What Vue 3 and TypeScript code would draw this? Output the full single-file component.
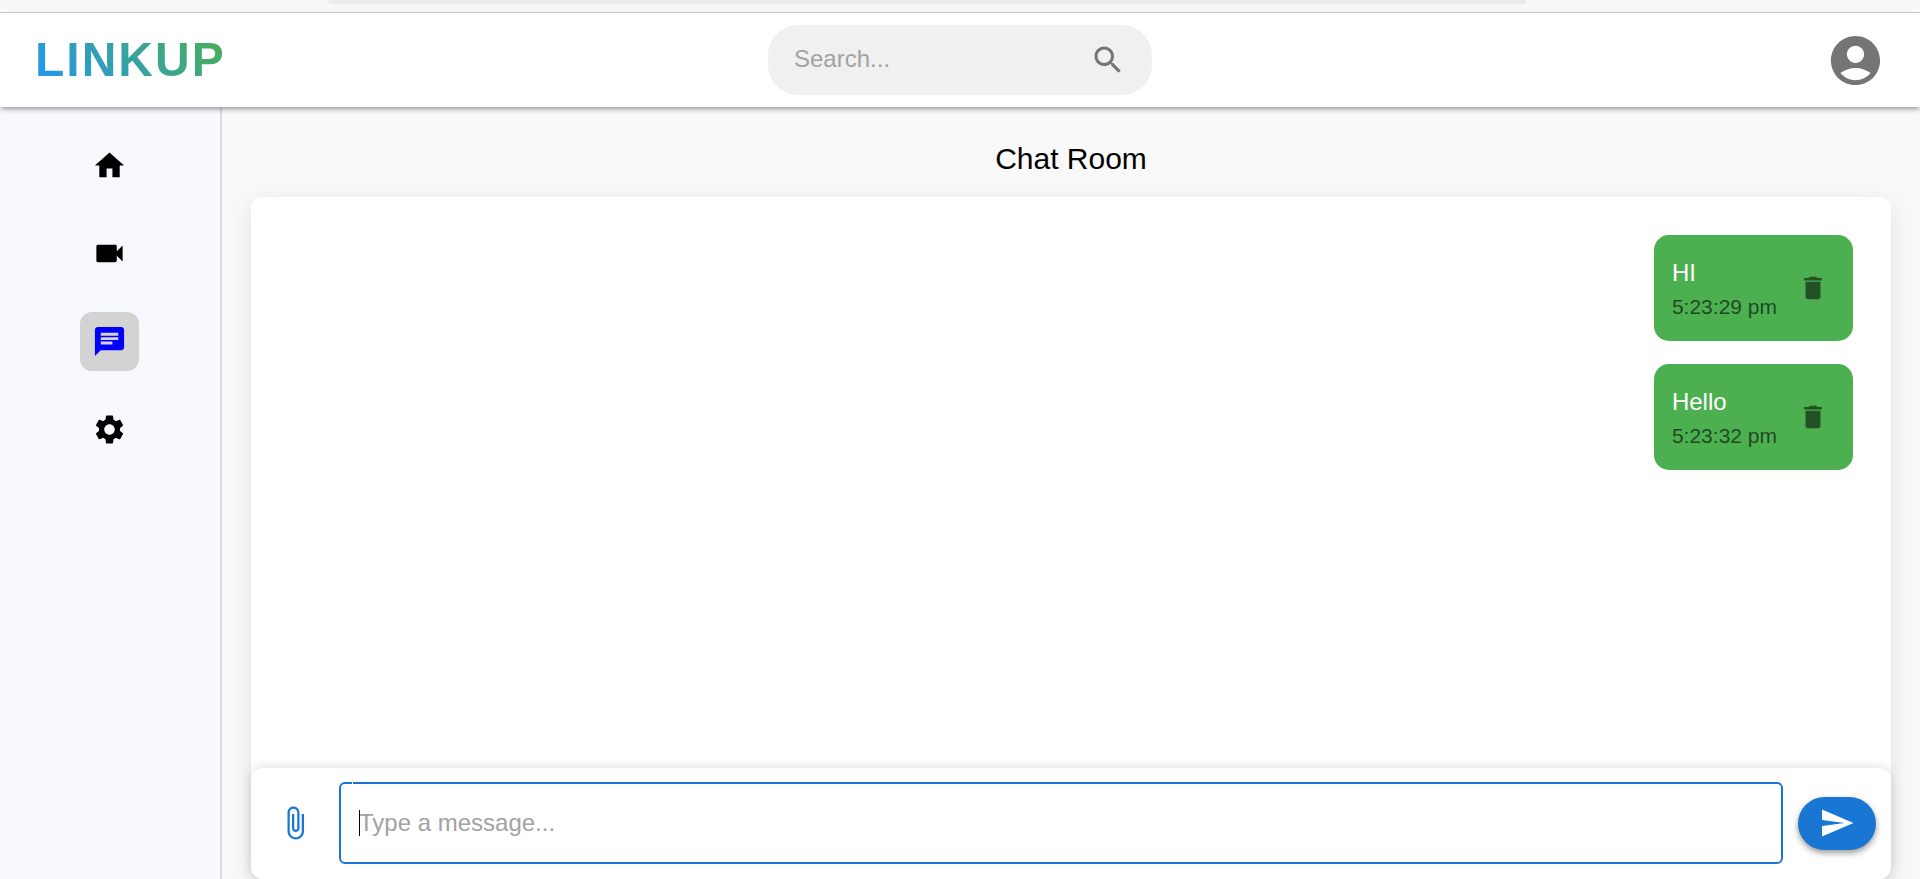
<script setup lang="ts">
import { ref } from 'vue'

interface NavItem {
  label: string
  path: string
  active: boolean
}

interface Message {
  id: number
  text: string
  time: string
}

const navItems: NavItem[] = [
  { label: 'Home', active: false, path: 'M10 20v-6h4v6h5v-8h3L12 3 2 12h3v8z' },
  {
    label: 'Video call',
    active: false,
    path: 'M17 10.5V7c0-.55-.45-1-1-1H4c-.55 0-1 .45-1 1v10c0 .55.45 1 1 1h12c.55 0 1-.45 1-1v-3.500l4 4v-11z',
  },
  {
    label: 'Chat',
    active: true,
    path: 'M20 2H4c-1.100 0-1.990.9-1.990 2L2 22l4-4h14c1.100 0 2-.9 2-2V4c0-1.100-.9-2-2-2M6 9h12v2H6zm8 5H6v-2h8zm4-6H6V6h12z',
  },
  {
    label: 'Settings',
    active: false,
    path: 'M19.140 12.940c.04-.3.060-.61.060-.94 0-.32-.02-.64-.07-.94l2.030-1.580c.18-.14.230-.41.120-.61l-1.920-3.320c-.12-.22-.37-.29-.59-.22l-2.390.96c-.5-.38-1.030-.7-1.620-.94l-.36-2.540c-.04-.24-.24-.41-.48-.41h-3.840c-.24 0-.43.17-.47.41l-.36 2.540c-.59.24-1.130.57-1.620.94l-2.390-.96c-.22-.08-.47 0-.59.22L2.740 8.870c-.12.210-.08.470.12.610l2.030 1.580c-.05.3-.09.630-.09.940s.02.640.070.940l-2.030 1.580c-.18.140-.23.410-.12.610l1.920 3.320c.12.220.370.290.590.220l2.390-.96c.5.380 1.030.7 1.620.940l.360 2.540c.05.240.240.410.480.410h3.840c.24 0 .44-.17.470-.41l.360-2.540c.59-.24 1.130-.56 1.620-.94l2.390.960c.22.080.470 0 .59-.22l1.920-3.320c.12-.22.070-.47-.12-.61zM12 15.600c-1.980 0-3.600-1.620-3.600-3.600s1.620-3.600 3.600-3.600 3.600 1.620 3.600 3.600-1.620 3.600-3.600 3.600',
  },
]

const messages = ref<Message[]>([
  { id: 1, text: 'HI', time: '5:23:29 pm' },
  { id: 2, text: 'Hello', time: '5:23:32 pm' },
])

const query = ref('')
const draft = ref('')

function remove(id: number) {
  messages.value = messages.value.filter((m) => m.id !== id)
}

function send() {
  const text = draft.value.trim()
  if (!text) return
  messages.value.push({ id: Date.now(), text, time: new Date().toLocaleTimeString() })
  draft.value = ''
}
</script>

<template>
  <div class="page">
    <div class="strip"><div class="strip-pill"></div></div>

    <header class="topbar">
      <div class="logo">LINKUP</div>
      <form class="search" role="search" @submit.prevent>
        <input v-model="query" type="text" placeholder="Search..." aria-label="Search" />
        <button type="submit" aria-label="Submit search">
          <svg viewBox="0 0 24 24"><path d="M15.500 14h-.79l-.28-.27C15.410 12.590 16 11.110 16 9.500 16 5.910 13.090 3 9.500 3S3 5.910 3 9.500 5.910 16 9.500 16c1.610 0 3.090-.59 4.230-1.570l.27.280v.79l5 4.990L20.490 19zm-6 0C7.010 14 5 11.990 5 9.500S7.010 5 9.500 5 14 7.010 14 9.500 11.990 14 9.500 14" /></svg>
        </button>
      </form>
      <div class="account">
        <button type="button" aria-label="Account">
          <svg viewBox="0 0 24 24"><path d="M12 2C6.480 2 2 6.480 2 12s4.480 10 10 10 10-4.480 10-10S17.520 2 12 2m0 4c1.930 0 3.500 1.570 3.500 3.500S13.930 13 12 13s-3.500-1.570-3.500-3.500S10.070 6 12 6m0 14c-2.030 0-4.430-.82-6.140-2.880C7.550 15.800 9.680 15 12 15s4.450.8 6.140 2.120C16.430 19.180 14.030 20 12 20" /></svg>
        </button>
      </div>
    </header>

    <div class="body">
      <nav class="sidebar" aria-label="Main">
        <a
          v-for="item in navItems"
          :key="item.label"
          href="#"
          class="nav-item"
          :class="{ active: item.active }"
          :aria-label="item.label"
        >
          <svg viewBox="0 0 24 24"><path :d="item.path" /></svg>
        </a>
      </nav>

      <main class="content">
        <h1>Chat Room</h1>
        <section class="card">
          <div class="messages">
            <article v-for="m in messages" :key="m.id" class="bubble">
              <div>
                <p class="text">{{ m.text }}</p>
                <p class="time">{{ m.time }}</p>
              </div>
              <button type="button" aria-label="Delete message" @click="remove(m.id)">
                <svg viewBox="0 0 24 24"><path d="M6 19c0 1.100.9 2 2 2h8c1.100 0 2-.9 2-2V7H6zM19 4h-3.500l-1-1h-5l-1 1H5v2h14z" /></svg>
              </button>
            </article>
          </div>

          <form class="composer" @submit.prevent="send">
            <button type="button" class="attach" aria-label="Attach file">
              <svg viewBox="0 0 24 24"><path d="M16.500 6v11.500c0 2.210-1.790 4-4 4s-4-1.790-4-4V5c0-1.380 1.120-2.500 2.500-2.500s2.500 1.120 2.500 2.500v10.500c0 .55-.45 1-1 1s-1-.45-1-1V6H10v9.500c0 1.380 1.120 2.500 2.500 2.500s2.500-1.120 2.500-2.500V5c0-2.210-1.790-4-4-4S7 2.790 7 5v12.500c0 3.040 2.460 5.500 5.500 5.500s5.500-2.460 5.500-5.500V6z" /></svg>
            </button>
            <div class="field">
              <input v-model="draft" type="text" placeholder="Type a message..." aria-label="Message" />
              <span class="notch"></span>
              <span v-if="!draft" class="caret"></span>
            </div>
            <button type="submit" class="send" aria-label="Send">
              <svg viewBox="0 0 24 24"><path d="M2.010 21 23 12 2.010 3 2 10l15 2-15 2z" /></svg>
            </button>
          </form>
        </section>
      </main>
    </div>
  </div>
</template>

<style>
body {
  margin: 0;
}
</style>

<style scoped>
.page {
  display: flex;
  flex-direction: column;
  min-height: 100vh;
  font-family: "Liberation Sans", Arial, sans-serif;
  font-size: 24px;
  color: #000;
  background: #f9f9f9;
}

button {
  display: flex;
  align-items: center;
  justify-content: center;
  padding: 0;
  border: 0;
  background: none;
  cursor: pointer;
}

input {
  box-sizing: border-box;
  min-width: 0;
  border: 0;
  outline: 0;
  background: none;
  font: inherit;
}

input::placeholder {
  color: #a2a2a2;
  opacity: 1;
}

svg {
  display: block;
  width: 36px;
  height: 36px;
  fill: currentColor;
}

.strip {
  height: 12px;
  border-bottom: 1px solid #ccc;
  background: #f8f8fb;
}

.strip-pill {
  width: 62.4%;
  height: 4px;
  margin: 0 auto 0 17.1%;
  border-radius: 0 0 8px 8px;
  background: #ebebed;
}

.topbar {
  position: relative;
  display: grid;
  grid-template-columns: 1fr 20% 1fr;
  align-items: center;
  padding: 12px 0;
  background: #fff;
  box-shadow: 0 3px 5px -1px rgba(0, 0, 0, 0.4);
}

.logo {
  justify-self: start;
  margin-left: 35px;
  font-size: 48px;
  line-height: 56px;
  font-weight: 700;
  letter-spacing: 2px;
  color: transparent;
  background: linear-gradient(45deg, #2196f3, #4caf50);
  background-clip: text;
}

.search {
  display: flex;
  align-items: center;
  height: 70px;
  padding: 0 26px;
  box-sizing: border-box;
  border-radius: 30px;
  background: #f0f0f0;
}

.search input {
  flex: 1;
  padding: 0 0 2px;
}

.search button,
.account button {
  color: #757575;
}

.account {
  justify-self: end;
  margin-right: 35px;
}

.account svg {
  width: 59px;
  height: 59px;
}

.body {
  display: flex;
  flex: 1;
}

.sidebar {
  display: flex;
  flex-direction: column;
  align-items: center;
  gap: 29px;
  width: 218px;
  padding: 29px 2px 0 0;
  border-right: 2px solid #dcdce0;
  background: #f8f9ff;
}

.nav-item {
  padding: 12px;
  border-radius: 12px;
  color: #000;
}

.nav-item svg {
  width: 35px;
  height: 35px;
}

.nav-item.active {
  background: #d3d3d3;
  color: #00f;
}

.content {
  display: flex;
  flex: 1;
  flex-direction: column;
  padding: 28px 29px 0;
}

h1 {
  margin: 0 0 14px;
  font-size: 30px;
  line-height: 48px;
  font-weight: 400;
  text-align: center;
}

.card {
  display: flex;
  flex: 1;
  flex-direction: column;
  border-radius: 12px;
  background: #fff;
  box-shadow: 0 6px 24px rgba(0, 0, 0, 0.1);
}

.messages {
  display: flex;
  flex: 1;
  flex-direction: column;
  align-items: flex-end;
  gap: 23px;
  padding: 38px;
}

.bubble {
  display: flex;
  align-items: center;
  gap: 13px;
  padding: 18px;
  border-radius: 15px;
  background: #4caf50;
}

.bubble p {
  margin: 0;
}

.text {
  color: #fff;
  line-height: 40px;
}

.bubble .time {
  margin-bottom: 2px;
  font-size: 21px;
  line-height: 28px;
  color: rgba(0, 0, 0, 0.6);
}

.bubble button {
  width: 45px;
  height: 45px;
  color: rgba(0, 0, 0, 0.54);
}

.bubble svg {
  width: 30px;
  height: 30px;
}

.composer {
  display: flex;
  align-items: center;
  gap: 15px;
  padding: 14px 15px 15px;
  border-radius: 12px;
  background: #fff;
  box-shadow: 0 0 12px rgba(0, 0, 0, 0.15);
}

.attach {
  width: 58px;
  height: 58px;
  color: #1976d2;
}

.field {
  position: relative;
  flex: 1;
  display: flex;
}

.field input {
  width: 100%;
  height: 82px;
  padding: 0 18px;
  border: 2px solid #1976d2;
  border-radius: 6px;
}

.notch {
  position: absolute;
  top: 0;
  left: 13px;
  width: 1px;
  height: 2px;
  background: #fff;
}

.caret {
  position: absolute;
  top: 28px;
  left: 20px;
  width: 1px;
  height: 26px;
  background: #000;
}

.send {
  width: 78px;
  height: 53px;
  border-radius: 27px;
  background: #1976d2;
  color: #fff;
  box-shadow: 0 3px 6px rgba(0, 0, 0, 0.4);
}
</style>
